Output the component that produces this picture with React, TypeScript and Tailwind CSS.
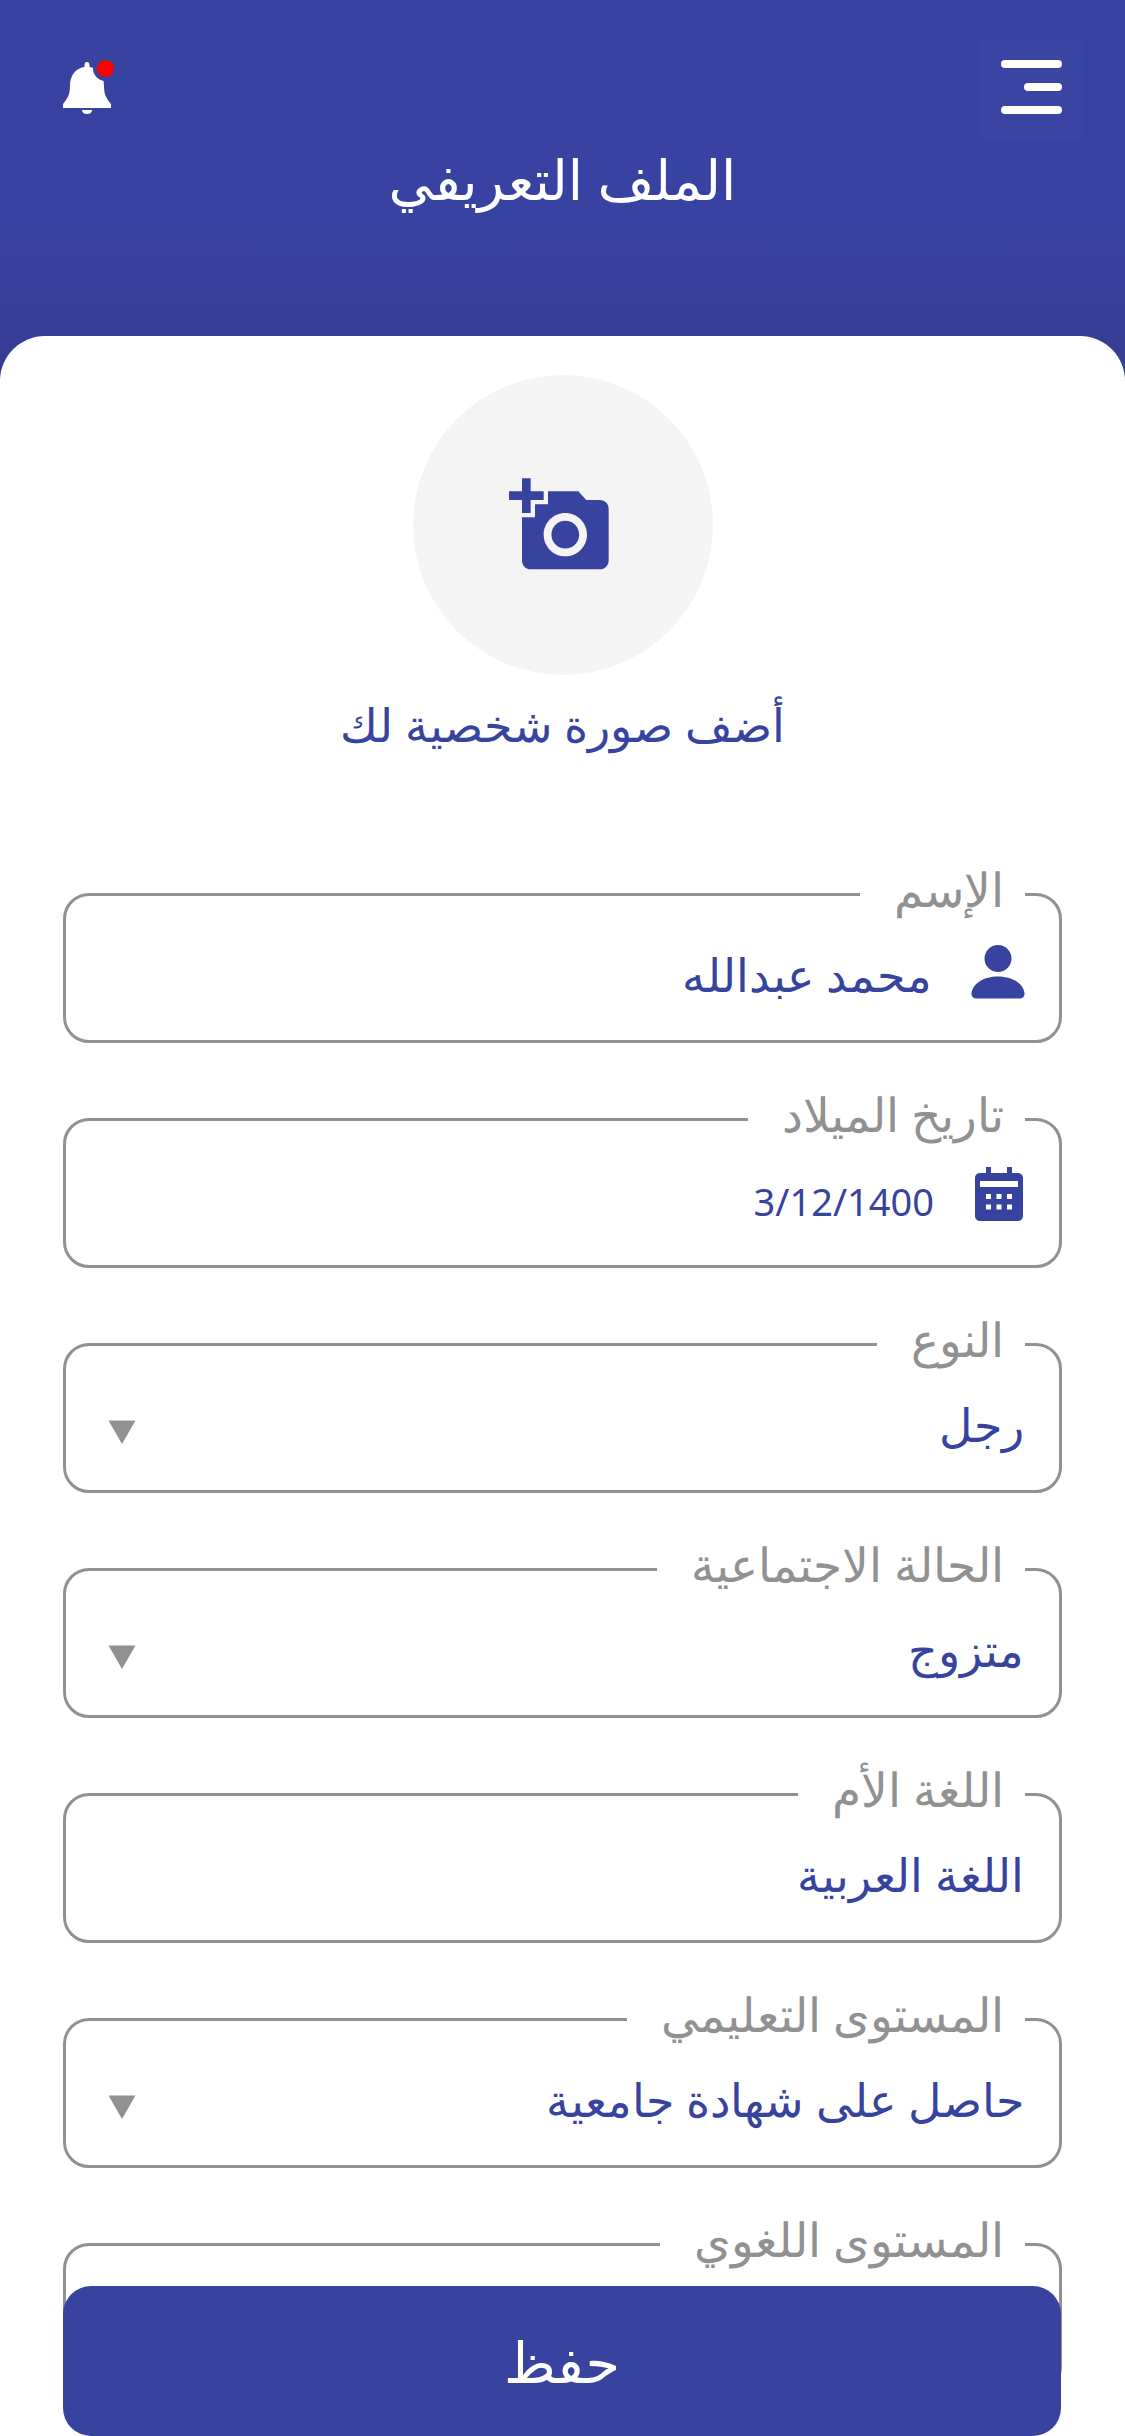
import { ReactNode } from "react";

const BLUE = "text-[#3843a0]";

function Caret() {
  return (
    <svg width="28" height="24" viewBox="0 0 28 24" className="fill-[#919191]">
      <path d="M0.5 0.5h27L14 24z" />
    </svg>
  );
}

function PersonIcon() {
  return (
    <svg width="54" height="54" viewBox="0 0 54 54" className="translate-x-[1px] translate-y-[2px] fill-[#3843a0]">
      <circle cx="27" cy="13.5" r="13.5" />
      <path d="M0.5 48C2 38 13 31.5 27 31.5S52 38 53.5 48c.4 3-1.500 5.500-4 5.500H4.500c-2.500 0-4.400-2.500-4-5.500z" />
    </svg>
  );
}

function CalendarIcon() {
  return (
    <svg width="48" height="54" viewBox="0 0 48 54" className="-translate-x-[1px] -translate-y-[1px] fill-[#3843a0]">
      <path
        fillRule="evenodd"
        d="M11 0h5v6h16V0h5v6h6c2.800 0 5 2.200 5 5v38c0 2.800-2.200 5-5 5H5c-2.800 0-5-2.200-5-5V11c0-2.800 2.200-5 5-5h6V0zM5 14v6h38v-6H5zM11 27v5h5v-5h-5zm10.500 0v5h5v-5h-5zM32 27v5h5v-5h-5zM11 37.500v5h5v-5h-5zm10.500 0v5h5v-5h-5zm10.500 0v5h5v-5h-5z"
      />
    </svg>
  );
}

function Field({
  label,
  value,
  icon,
  caret,
  ltr,
}: {
  label: string;
  value?: string;
  icon?: ReactNode;
  caret?: boolean;
  ltr?: boolean;
}) {
  return (
    <div className="relative h-[150px] rounded-[26px] border-[3px] border-[#919191] bg-white">
      <span className="absolute right-[34px] top-[-35px] bg-white pl-[34px] pr-[21px] text-[47px] font-light leading-[56px] text-[#919191]">
        {label}
      </span>
      <div className="flex h-full items-center gap-[38px] pt-[16px] pl-[42px] pr-[35px]">
        {icon && <div className="-mt-[12px] flex shrink-0">{icon}</div>}
        {ltr ? (
          <span className={`mr-[4px] text-[38px] leading-none ${BLUE}`} dir="ltr">
            {value}
          </span>
        ) : (
          <span className={`-mt-[5px] text-[46px] font-light leading-none ${BLUE}`}>{value}</span>
        )}
        {caret && (
          <div className="mr-auto mt-[12px] flex">
            <Caret />
          </div>
        )}
      </div>
    </div>
  );
}

export default function App() {
  return (
    <div
      dir="rtl"
      className="relative h-[2436px] w-[1125px] overflow-hidden bg-white"
      style={{ fontFamily: '"Noto Sans", "DejaVu Sans", sans-serif' }}
    >
      {/* Header */}
      <header className="h-[381px] bg-linear-to-b from-[#3843a1] from-60% to-[#353e94] to-90% px-[43px] pt-[40px]">
        <div className="flex items-start justify-between">
          <button className="flex h-[100px] w-[102px] flex-col items-start justify-center gap-[15px] bg-[#3a45a3] px-[20px] pb-[6px]">
            <span className="h-[8px] w-[61px] rounded-full bg-white" />
            <span className="h-[8px] w-[38px] rounded-full bg-white" />
            <span className="h-[8px] w-[61px] rounded-full bg-white" />
          </button>
          <div className="relative ml-[20px] mt-[22px]">
            <svg width="48" height="52" viewBox="0 0 48 52" className="fill-white">
              <path d="M24 0c1.500 0 2.500 1.200 2.500 3v2C36 6.500 41 14 41 24c0 8 2 12 7 18v4H0v-4c5-6 7-10 7-18C7 14 12 6.500 21.500 5V3c0-1.800 1-3 2.500-3z" />
              <path d="M19 48h10c0 2.500-2 4-5 4s-5-1.500-5-4z" />
            </svg>
            <span className="absolute left-[34px] top-[-2px] h-[17px] w-[17px] rounded-full bg-[#ff0000] ring-[4px] ring-[#3843a1]" />
          </div>
        </div>
        <h1 className="mt-[4px] text-center text-[55px] font-normal leading-[70px] text-white">
          الملف التعريفي
        </h1>
      </header>

      {/* Card */}
      <main className="relative -mt-[45px] rounded-t-[45px] bg-white px-[63px] pt-[39px]">
        <div className="flex flex-col items-center">
          <div className="flex h-[300px] w-[300px] items-center justify-center rounded-full bg-[#f4f4f4]">
            <svg width="104" height="104" viewBox="0 0 24 24" className="-translate-x-[2px] translate-y-[1px] fill-[#3843a0]">
              <path d="M3 4V1h2v3h3v2H5v3H3V6H0V4h3zm3 6V7h3V4h7l1.830 2H21c1.100 0 2 .9 2 2v12c0 1.100-.9 2-2 2H5c-1.100 0-2-.9-2-2V10h3zm7 9c2.760 0 5-2.240 5-5s-2.240-5-5-5-5 2.240-5 5 2.240 5 5 5zm-3.200-5c0 1.770 1.430 3.200 3.200 3.200s3.200-1.430 3.200-3.200-1.430-3.200-3.200-3.200-3.200 1.430-3.200 3.200z" />
            </svg>
          </div>
          <p className={`mt-[19px] text-[46px] font-light leading-[60px] ${BLUE}`}>أضف صورة شخصية لك</p>
        </div>

        <div className="mt-[139px] flex flex-col gap-[75px]">
          <Field label="الإسم" value="محمد عبدالله" icon={<PersonIcon />} />
          <Field label="تاريخ الميلاد" value="3/12/1400" icon={<CalendarIcon />} ltr />
          <Field label="النوع" value="رجل" caret />
          <Field label="الحالة الاجتماعية" value="متزوج" caret />
          <Field label="اللغة الأم" value="اللغة العربية" />
          <Field label="المستوى التعليمي" value="حاصل على شهادة جامعية" caret />
          <Field label="المستوى اللغوي" />
        </div>
      </main>

      {/* Save button sits over the scrolling form */}
      <button className="absolute bottom-0 left-[63px] h-[150px] w-[998px] rounded-[28px] bg-[#3843a0] text-[56px] text-white">
        حفظ
      </button>
    </div>
  );
}
